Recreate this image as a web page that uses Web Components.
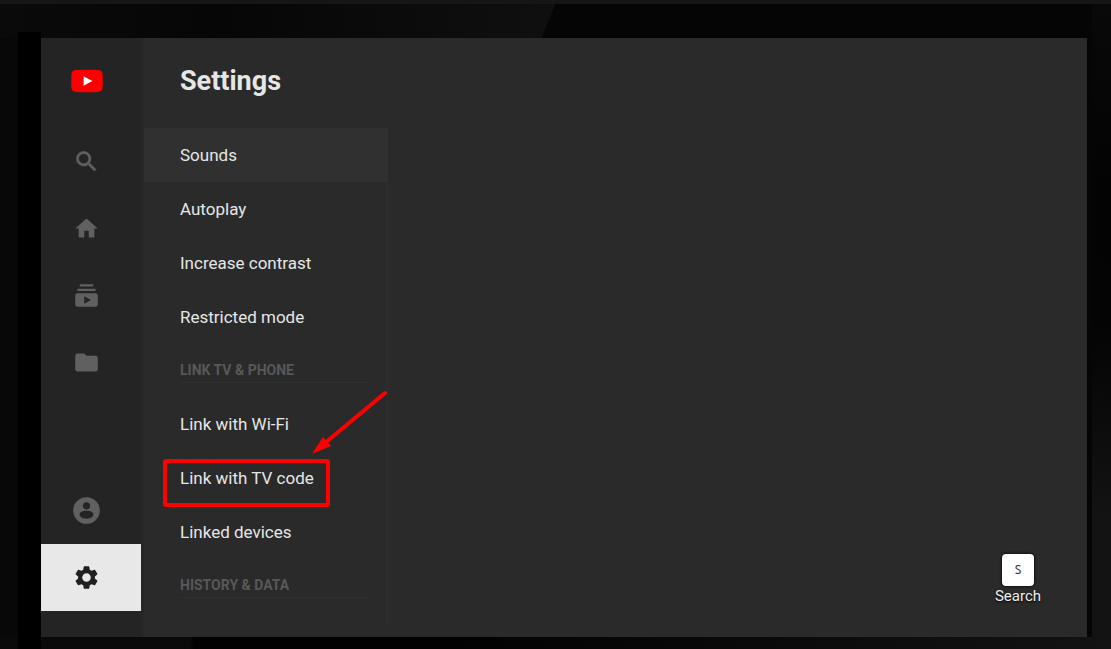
<!DOCTYPE html>
<html lang="en">
<head>
<meta charset="utf-8">
<title>Settings</title>
<style>
html, body { height: 100%; margin: 0; }
body { background: #060606; color: #e6e6e6; font-family: Roboto, "Liberation Sans", sans-serif; }
</style>
</head>
<body>
<tv-frame>
  <nav-rail slot="rail">
    <rail-item icon="search" label="Search"></rail-item>
    <rail-item icon="home" label="Home"></rail-item>
    <rail-item icon="subs" label="Subscriptions"></rail-item>
    <rail-item icon="folder" label="Library"></rail-item>
    <rail-item slot="bottom" icon="account" label="Account"></rail-item>
    <rail-item slot="bottom" icon="gear" label="Settings" selected></rail-item>
  </nav-rail>
  <settings-panel>
    <span slot="title">Settings</span>
    <menu-item active>Sounds</menu-item>
    <menu-item>Autoplay</menu-item>
    <menu-item>Increase contrast</menu-item>
    <menu-item>Restricted mode</menu-item>
    <menu-section>Link TV &amp; phone</menu-section>
    <menu-item>Link with Wi-Fi</menu-item>
    <menu-item>Link with TV code<call-out slot="mark"></call-out></menu-item>
    <menu-item>Linked devices</menu-item>
    <menu-section>History &amp; data</menu-section>
  </settings-panel>
  <key-hint slot="hint" key="S">Search</key-hint>
</tv-frame>
<script>
const define = (name, html, setup) => {
  const template = document.createElement('template');
  template.innerHTML = html;
  customElements.define(name, class extends HTMLElement {
    constructor() {
      super();
      this.attachShadow({ mode: 'open' }).append(template.content.cloneNode(true));
    }
    connectedCallback() { if (setup) setup(this, this.shadowRoot); }
  });
};

const icons = {
  search: ['0 0 24 24', 27, '<path stroke="currentColor" stroke-width=".5" d="M15.5 14h-.79l-.28-.27A6.47 6.47 0 0 0 16 9.5 6.5 6.5 0 1 0 9.5 16c1.61 0 3.09-.59 4.23-1.57l.27.28v.79l5 4.99L20.49 19l-4.99-5zm-6 0a4.5 4.5 0 1 1 0-9 4.5 4.5 0 0 1 0 9z"/>'],
  home: ['0 0 24 24', 27, '<path d="M10 20v-6h4v6h5v-8h3L12 3 2 12h3v8z"/>'],
  subs: ['0 0 24 24', 27, '<path d="M20 8H4V6h16v2zm-2-6H6v2h12V2zm4 10v8a2 2 0 0 1-2 2H4a2 2 0 0 1-2-2v-8c0-1.100.9-2 2-2h16a2 2 0 0 1 2 2zm-6 4-6-3.270v6.530L16 16z"/>'],
  folder: ['0 0 24 24', 27, '<path d="M10 4H4a2 2 0 0 0-1.990 2L2 18c0 1.100.9 2 2 2h16a2 2 0 0 0 2-2V8a2 2 0 0 0-2-2h-8l-2-2z"/>'],
  account: ['0 0 28 28', 27, '<path fill-rule="evenodd" d="M14 .2a13.800 13.800 0 1 0 0 27.600 13.800 13.800 0 0 0 0-27.600zM14 5.500a3.700 3.700 0 1 1 0 7.400 3.700 3.700 0 0 1 0-7.400zM14 14.300c4 0 7.200 1.600 7.200 3.900S18 22.500 14 22.500s-7.200-2-7.200-4.300 3.200-3.900 7.200-3.900z"/>'],
  gear: ['0 0 24 24', 27, '<path d="M19.430 12.980c.04-.32.07-.64.07-.98s-.03-.66-.07-.98l2.110-1.650c.19-.15.24-.42.12-.64l-2-3.460c-.12-.22-.39-.3-.61-.22l-2.490 1c-.52-.4-1.080-.73-1.690-.98l-.38-2.650A.49.49 0 0 0 14 2h-4c-.25 0-.46.18-.49.42l-.38 2.650c-.61.25-1.170.59-1.690.98l-2.490-1c-.23-.09-.49 0-.61.22l-2 3.460c-.13.22-.07.49.12.64l2.110 1.650c-.04.32-.07.65-.07.98s.03.66.07.98l-2.110 1.650c-.19.15-.24.42-.12.64l2 3.460c.12.22.39.3.61.22l2.490-1c.52.4 1.080.73 1.690.98l.38 2.650c.03.24.24.42.49.42h4c.25 0 .46-.18.49-.42l.38-2.650c.61-.25 1.170-.59 1.690-.98l2.490 1c.23.09.49 0 .61-.22l2-3.460c.12-.22.07-.49-.12-.64l-2.110-1.650zM12 15.800a3.800 3.800 0 1 1 0-7.600 3.800 3.800 0 0 1 0 7.600z"/>']
};

define('tv-frame', `
<style>
  :host {
    display: flex; box-sizing: border-box; min-height: 100vh;
    padding: 38px 24px 12px 41px;
    background:
      linear-gradient(#161616, #161616) top / 100% 4px no-repeat,
      linear-gradient(#000, #000) 18px 32px / 23px 100% no-repeat,
      linear-gradient(90deg, #0a0a0a, #060606 40%, #0f0f0f) left top / 541px 38px no-repeat,
      linear-gradient(to bottom right, #0f0f0f 50%, transparent 51%) 541px 0 / 16px 38px no-repeat,
      linear-gradient(90deg, #0a0a0a 190px, #020202 194px 40%, #131313) left bottom / 100% 12px no-repeat,
      linear-gradient(#080808, #080808) left / 18px 100% no-repeat,
      linear-gradient(#090909, #030303 30%, #040404 50%, #131313 80%) right / 19px 100% no-repeat,
      #050505;
  }
  .screen { flex: 1; display: flex; background: #2a2a2a; min-width: 0; }
  main { flex: 1; min-width: 0; display: flex; }
  aside { margin-left: auto; align-self: flex-end; padding: 0 46px 31px 0; }
</style>
<div class="screen">
  <slot name="rail"></slot>
  <main><slot></slot><aside><slot name="hint"></slot></aside></main>
</div>`);

define('nav-rail', `
<style>
  :host { display: block; flex: none; width: 100px; background: #242424; border-right: 3px solid #272727; }
  nav { display: flex; flex-direction: column; box-sizing: border-box; height: 100%; padding-bottom: 26px; }
  .logo { display: flex; align-items: center; justify-content: center; height: 86px; padding-right: 8px; margin-bottom: 4px; }
  .bottom { margin-top: auto; }
</style>
<nav aria-label="Main">
  <div class="logo">
    <svg width="32" height="24" viewBox="0 0 32 24" role="img" aria-label="YouTube">
      <path fill="#f00" d="M5 1Q16 .7 27 1q4.300.2 4.600 4.200.4 6.800 0 13.600-.3 4-4.600 4.200-11 .4-22 0-4.300-.2-4.600-4.200-.4-6.800 0-13.600Q.7 1.200 5 1z"/>
      <path fill="#fff" d="M12.600 7.200v9.600l8.800-4.800z"/>
    </svg>
  </div>
  <slot></slot>
  <div class="bottom"><slot name="bottom"></slot></div>
</nav>`);

define('rail-item', `
<style>
  :host { display: block; color: #606060; }
  :host([selected]) { color: #202020; background: #e8e8e8; }
  button { display: flex; align-items: center; justify-content: center; width: 100%; height: 67px;
    margin: 0; padding: 0 9px 0 0; border: 0; background: none; color: inherit; }
  svg { display: block; fill: currentColor; }
</style>
<button type="button"></button>`, (host, root) => {
  const [box, size, art] = icons[host.getAttribute('icon')];
  const button = root.querySelector('button');
  button.setAttribute('aria-label', host.getAttribute('label'));
  button.innerHTML = `<svg width="${size}" height="${size}" viewBox="${box}" aria-hidden="true">${art}</svg>`;
});

define('settings-panel', `
<style>
  :host { display: flex; flex-direction: column; flex: none; width: 244px; }
  h1 { display: flex; align-items: center; box-sizing: border-box; height: 86px; margin: 0 0 4px; padding-left: 36px;
    font-size: 27px; line-height: 32px; font-weight: 700; }
  .list { flex: 1; margin-bottom: 13px; border-right: 1px solid #2f2f2f; }
</style>
<h1><slot name="title"></slot></h1>
<div class="list"><slot></slot></div>`);

define('menu-item', `
<style>
  :host { display: block; position: relative; }
  :host([active]) { background: #303030; }
  button { display: block; width: 100%; height: 54px; margin: 0; padding: 0 0 0 36px; border: 0; background: none;
    color: inherit; font: 17px/24px Roboto, "Liberation Sans", sans-serif; text-align: left; }
</style>
<button type="button"><slot></slot></button><slot name="mark"></slot>`);

define('menu-section', `
<style>
  :host { display: block; box-sizing: border-box; height: 53px; padding: 16px 18px 0 36px; }
  h2 { margin: 0; padding-bottom: 2px; border-bottom: 1px solid #303030; color: #585858; font-size: 14px; line-height: 20px;
    font-weight: 700; text-transform: uppercase; }
</style>
<h2><slot></slot></h2>`);

define('call-out', `
<style>
  :host { position: absolute; z-index: 1; left: 19px; top: -62px; pointer-events: none; }
  svg { display: block; }
</style>
<svg width="228" height="120" viewBox="0 0 228 120" fill="none" stroke="#f00" aria-hidden="true">
  <rect x="2" y="72" width="163" height="44" rx="1" stroke-width="4" stroke-linejoin="round"/>
  <path d="M222 4 162 54" stroke-width="4" stroke-linecap="round"/>
  <path d="M149 65 160 48l8 9z" fill="#f00" stroke="none"/>
</svg>`);

define('key-hint', `
<style>
  :host { display: block; }
  button { display: flex; flex-direction: column; align-items: center; margin: 0; padding: 0; border: 0; background: none;
    color: #eee; font: 15px/20px Roboto, "Liberation Sans", sans-serif; text-shadow: 0 1px 2px #000; }
  kbd { display: flex; align-items: center; justify-content: center; width: 32px; height: 32px; border-radius: 4px;
    background: #fff; color: #333; font: 12px/16px "Noto Sans", sans-serif; text-shadow: none; box-shadow: 0 0 2px 1px #111; }
</style>
<button type="button"><kbd></kbd><span><slot></slot></span></button>`, (host, root) => {
  root.querySelector('kbd').textContent = host.getAttribute('key');
});
</script>
</body>
</html>
